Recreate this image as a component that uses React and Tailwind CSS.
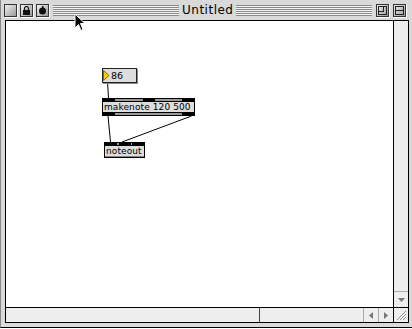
import React from 'react';

const stripes =
  'bg-[repeating-linear-gradient(to_bottom,#8a8a8a_0px,#8a8a8a_1px,#f4f4f4_1px,#f4f4f4_2px)]';

function TitleBox({ children }) {
  return (
    <div className="w-[13px] h-[13px] border border-[#333] bg-gradient-to-br from-[#f2f2f2] to-[#9a9a9a] flex items-center justify-center shrink-0 shadow-[1px_1px_0_#fff]">
      {children}
    </div>
  );
}

function Stripes({ className }) {
  return <div className={`h-[11px] ${stripes} ${className}`} />;
}

function NumberBox({ x, y, value }) {
  return (
    <div
      className="absolute h-[15px] w-[35px] bg-[#dddddd] border border-[#222] shadow-[1px_1px_0_#888] flex items-center"
      style={{ left: x, top: y }}
    >
      <svg width="7" height="11" viewBox="0 0 7 11" className="shrink-0">
        <path d="M0.5 0.5 L6 5.5 L0.5 10.5 Z" fill="#ffcc00" stroke="#8a6d00" strokeWidth="1" />
      </svg>
      <span className="ml-[1px] text-[9.5px] leading-none text-black">{value}</span>
    </div>
  );
}

function ObjectBox({ x, y, w, label, inlets, outlets }) {
  return (
    <div
      className="absolute bg-[#dddddd] border border-black flex flex-col"
      style={{ left: x, top: y, width: w }}
    >
      <div className="h-[3px] bg-[#999] border-b border-black flex justify-between">
        {inlets.map((_, i) => (
          <div key={i} className="w-[12px] h-full bg-black" />
        ))}
      </div>
      <div className="px-[1px] text-[9px] leading-[10px] text-black whitespace-nowrap tracking-[0.1px]">{label}</div>
      {outlets.length > 0 ? (
        <div className="h-[3px] bg-[#999] border-t border-black flex justify-between">
          {outlets.map((_, i) => (
            <div key={i} className="w-[12px] h-full bg-black" />
          ))}
        </div>
      ) : (
        <div className="h-[1px] bg-[#888]" />
      )}
    </div>
  );
}

export default function App() {
  return (
    <div className="w-[412px] h-[329px] bg-white relative overflow-hidden font-['DejaVu_Sans',sans-serif]">
      <div className="w-[412px] h-[328px] bg-[#d9d9d9] border-l border-l-[#888] border-b border-b-black flex flex-col">
        {/* title bar */}
        <div className="h-[20px] flex items-center pl-[3px] pr-[6px] shrink-0">
          <TitleBox />
          <div className="w-[3px]" />
          <TitleBox>
            <svg width="9" height="9" viewBox="0 0 9 9">
              <path d="M2.5 4 V2.5 a2 2 0 0 1 4 0 V4" fill="none" stroke="#111" strokeWidth="1.2" />
              <rect x="1" y="4" width="7" height="5" fill="#111" />
            </svg>
          </TitleBox>
          <div className="w-[3px]" />
          <TitleBox>
            <svg width="9" height="9" viewBox="0 0 9 9">
              <circle cx="4.5" cy="5" r="3.5" fill="#111" />
              <rect x="4" y="0" width="1.5" height="4" fill="#111" />
            </svg>
          </TitleBox>
          <Stripes className="w-[126px] ml-[4px]" />
          <div className="px-[3px] text-[12px] leading-none text-black tracking-[0.5px]">Untitled</div>
          <Stripes className="flex-1 mr-[4px]" />
          <TitleBox>
            <div className="w-[9px] h-[9px] border border-[#222] relative">
              <div className="absolute left-0 top-0 w-[5px] h-[5px] border-r border-b border-[#222]" />
            </div>
          </TitleBox>
          <div className="w-[4px]" />
          <TitleBox>
            <div className="w-[9px] h-[9px] border border-[#222] flex flex-col justify-center">
              <div className="h-[1px] bg-[#222]" />
            </div>
          </TitleBox>
        </div>

        {/* content */}
        <div className="ml-[4px] mr-[3px] h-[303px] border border-black flex flex-col">
          <div className="flex-1 flex min-h-0">
            <div className="flex-1 bg-white relative">
              <svg className="absolute inset-0" width="386" height="286">
                <line x1="101.5" y1="61" x2="102.5" y2="77" stroke="#000" strokeWidth="1" />
                <line x1="102" y1="95" x2="104.5" y2="121" stroke="#000" strokeWidth="1" />
                <line x1="185.5" y1="95" x2="116" y2="121" stroke="#000" strokeWidth="1" />
              </svg>
              <NumberBox x={96} y={47} value="86" />
              <ObjectBox x={96} y={77} w={93} label="makenote 120 500" inlets={[0, 1, 2]} outlets={[0, 1]} />
              <ObjectBox x={98} y={121} w={41} label="noteout" inlets={[0, 1, 2]} outlets={[]} />
            </div>
            <div className="w-[15px] border-l border-black bg-[#eeeeee] flex flex-col justify-end">
              <div className="h-[16px] border-t border-[#aaa] flex items-center justify-center">
                <svg width="7" height="4" viewBox="0 0 7 4">
                  <path d="M0 0 H7 L3.5 4 Z" fill="#777" />
                </svg>
              </div>
            </div>
          </div>
          <div className="h-[15px] border-t border-black flex bg-[#eeeeee]">
            <div className="w-[254px] border-r border-[#444]" />
            <div className="flex-1" />
            <div className="w-[15px] border-l border-[#aaa] flex items-center justify-center">
              <svg width="4" height="7" viewBox="0 0 4 7">
                <path d="M4 0 V7 L0 3.5 Z" fill="#777" />
              </svg>
            </div>
            <div className="w-[15px] border-l border-[#aaa] flex items-center justify-center">
              <svg width="4" height="7" viewBox="0 0 4 7">
                <path d="M0 0 V7 L4 3.5 Z" fill="#777" />
              </svg>
            </div>
            <div className="w-[15px] border-l border-black flex items-center justify-center">
              <svg width="11" height="11" viewBox="0 0 11 11">
                <path d="M1 10 L10 1 M4 10 L10 4 M7 10 L10 7" stroke="#888" strokeWidth="1" />
                <path d="M2 10 L10 2 M5 10 L10 5 M8 10 L10 8" stroke="#fff" strokeWidth="1" />
              </svg>
            </div>
          </div>
        </div>
      </div>

      {/* pointer */}
      <svg className="absolute left-[74px] top-[13px]" width="12" height="19" viewBox="0 0 12 19">
        <path
          d="M1 1 L1 15 L4.5 11.5 L7 17.5 L9 16.5 L6.5 10.5 L11 10.5 Z"
          fill="#000"
          stroke="#fff"
          strokeWidth="1"
        />
      </svg>
    </div>
  );
}
